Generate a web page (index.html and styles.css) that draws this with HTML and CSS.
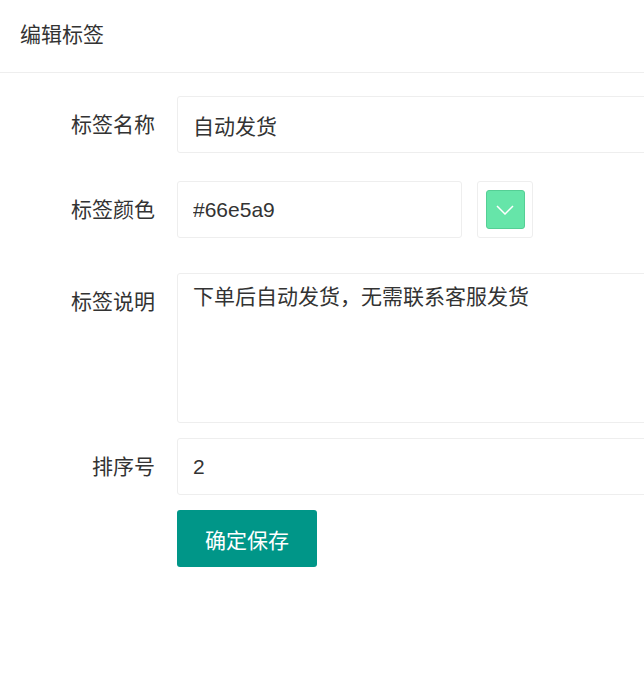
FILE: index.html
```html
<!DOCTYPE html>
<html lang="zh-CN">
<head>
  <meta charset="UTF-8" />
  <meta name="viewport" content="width=device-width, initial-scale=1.0" />
  <title>编辑标签</title>
  <link rel="stylesheet" href="styles.css">
</head>
<body>
  <div class="layer-title">编辑标签</div>
  <form class="tag-form">
    <div class="form-item item-name">
      <label class="form-label">标签名称</label>
      <div class="input-block">
        <input class="form-input" type="text" value="自动发货">
      </div>
    </div>
    <div class="form-item item-color">
      <label class="form-label">标签颜色</label>
      <div class="input-inline">
        <input class="form-input color-input" type="text" value="#66e5a9">
        <div class="color-picker">
          <span class="color-swatch">
            <svg width="18" height="10" viewBox="0 0 18 10">
              <path d="M1 1 L9 9 L17 1" fill="none" stroke="#fff" stroke-width="1.5"/>
            </svg>
          </span>
        </div>
      </div>
    </div>
    <div class="form-item item-desc">
      <label class="form-label">标签说明</label>
      <div class="input-block">
        <textarea class="form-textarea">下单后自动发货，无需联系客服发货</textarea>
      </div>
    </div>
    <div class="form-item item-sort">
      <label class="form-label">排序号</label>
      <div class="input-block">
        <input class="form-input" type="text" value="2">
      </div>
    </div>
    <div class="form-item item-btn">
      <span></span>
      <div>
        <button class="save-btn" type="button">确定保存</button>
      </div>
    </div>
  </form>
</body>
</html>
```

FILE: styles.css
```css
body {
  margin: 0;
  background: #fff;
  color: #333;
  font-family: "Liberation Sans", "Noto Sans CJK SC", sans-serif;
  font-size: 21px;
  overflow: hidden;
}
.layer-title {
  height: 72px;
  line-height: 70px;
  padding-left: 20px;
  font-size: 21px;
  color: #333;
  border-bottom: 1px solid #eee;
}
.tag-form {
  padding-top: 23px;
  overflow: hidden;
}
.form-item {
  display: grid;
  grid-template-columns: 177px 1fr;
  margin-right: -100px;
}
.form-label {
  text-align: right;
  padding-right: 22px;
  line-height: 57px;
  color: #333;
}
.item-name {
  margin-bottom: 28px;
}
.item-color {
  margin-bottom: 35px;
}
.item-desc {
  margin-bottom: 15px;
}
.item-desc .form-label {
  line-height: 57px;
}
.item-sort {
  margin-bottom: 15px;
}
.form-input {
  display: block;
  box-sizing: border-box;
  width: 100%;
  height: 57px;
  padding: 0 15px;
  border: 1px solid #eee;
  border-radius: 3px;
  font-family: inherit;
  font-size: 21px;
  color: #333;
  outline: none;
}
.input-inline {
  display: flex;
  align-items: center;
  gap: 15px;
}
.color-input {
  width: 285px;
}
.color-picker {
  box-sizing: border-box;
  width: 56px;
  height: 57px;
  border: 1px solid #eee;
  border-radius: 3px;
  display: flex;
  align-items: center;
  justify-content: center;
}
.color-swatch {
  box-sizing: border-box;
  width: 39px;
  height: 39px;
  background: #66e5a9;
  border: 1px solid #55cf95;
  border-radius: 3px;
  display: flex;
  align-items: center;
  justify-content: center;
}
.form-textarea {
  display: block;
  box-sizing: border-box;
  width: 100%;
  height: 150px;
  padding: 8px 15px;
  border: 1px solid #eee;
  border-radius: 3px;
  font-family: inherit;
  font-size: 21px;
  line-height: 30px;
  color: #333;
  resize: none;
  outline: none;
}
.save-btn {
  width: 140px;
  height: 57px;
  border: none;
  border-radius: 3px;
  background: #009688;
  color: #fff;
  font-family: inherit;
  font-size: 21px;
  cursor: pointer;
}
```
